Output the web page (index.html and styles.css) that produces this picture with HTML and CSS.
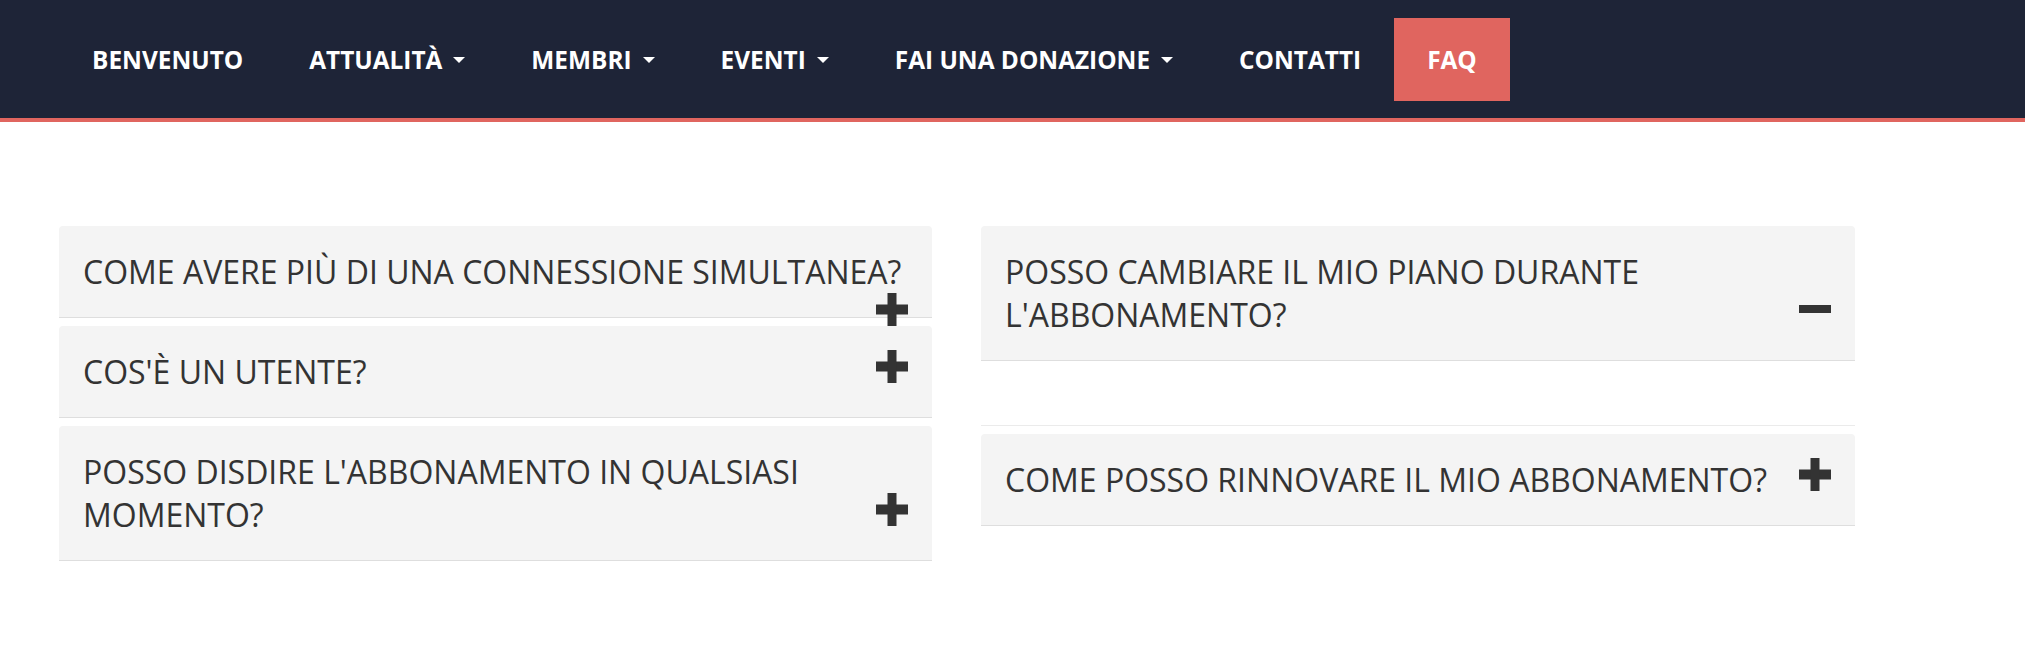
FILE: index.html
```html
<!DOCTYPE html>
<html lang="it">
  <head>
    <meta charset="UTF-8" />
    <meta name="viewport" content="width=device-width, initial-scale=1.0" />
    <title>FAQ</title>
    <link rel="stylesheet" href="styles.css">
  </head>
  <body>
    <nav class="topbar">
      <ul class="menu">
        <li><a href="#">Benvenuto</a></li>
        <li><a href="#">Attualità <span class="caret"></span></a></li>
        <li><a href="#">Membri <span class="caret"></span></a></li>
        <li><a href="#">Eventi <span class="caret"></span></a></li>
        <li><a href="#">Fai una donazione <span class="caret"></span></a></li>
        <li><a href="#">Contatti</a></li>
        <li class="active"><a href="#">FAQ</a></li>
      </ul>
    </nav>

    <main class="faq">
      <div class="faq-col">
        <div class="faq-item">
          <h4 class="faq-title">Come avere più di una connessione simultanea?<span class="faq-icon"><svg width="32" height="33" viewBox="0 0 32 33"><rect x="0" y="11.5" width="32" height="10" /><rect x="11.5" y="0" width="9" height="33" /></svg></span></h4>
        </div>
        <div class="faq-item">
          <h4 class="faq-title">Cos'è un utente?<span class="faq-icon"><svg width="32" height="33" viewBox="0 0 32 33"><rect x="0" y="11.5" width="32" height="10" /><rect x="11.5" y="0" width="9" height="33" /></svg></span></h4>
        </div>
        <div class="faq-item">
          <h4 class="faq-title">Posso disdire l'abbonamento in qualsiasi momento?<span class="faq-icon"><svg width="32" height="33" viewBox="0 0 32 33"><rect x="0" y="11.5" width="32" height="10" /><rect x="11.5" y="0" width="9" height="33" /></svg></span></h4>
        </div>
      </div>

      <div class="faq-col">
        <div class="faq-item open">
          <h4 class="faq-title">Posso cambiare il mio piano durante l'abbonamento?<span class="faq-icon"><svg width="32" height="33" viewBox="0 0 32 33"><rect x="0" y="12" width="33" height="8" /></svg></span></h4>
        </div>
        <div class="faq-body"></div>
        <div class="faq-item">
          <h4 class="faq-title">Come posso rinnovare il mio abbonamento?<span class="faq-icon"><svg width="32" height="33" viewBox="0 0 32 33"><rect x="0" y="11.5" width="32" height="10" /><rect x="11.5" y="0" width="9" height="33" /></svg></span></h4>
        </div>
      </div>
    </main>
  </body>
</html>
```

FILE: styles.css
```css
body {
  font-family: "Open Sans", Arial, sans-serif;
  margin: 0;
  padding: 0;
  background-color: #fff;
  color: #333;
}

/* Top navigation */
.topbar {
  background-color: #1e2437;
  border-bottom: 4px solid #e0655f;
  height: 118px;
  padding-left: 59px;
  display: flex;
  align-items: center;
}

.menu {
  list-style: none;
  margin: 0;
  padding: 0;
  display: flex;
}

.menu a {
  display: flex;
  align-items: center;
  gap: 11px;
  height: 83px;
  padding: 0 33px;
  color: #fff;
  font-size: 24.4px;
  font-weight: 700;
  text-transform: uppercase;
  text-decoration: none;
}

.menu .active a {
  background-color: #e0655f;
}

.caret {
  width: 0;
  height: 0;
  border-top: 6px solid #fff;
  border-left: 6px solid transparent;
  border-right: 6px solid transparent;
  margin-top: 2px;
}

/* FAQ accordion */
.faq {
  display: grid;
  grid-template-columns: 873px 874px;
  column-gap: 49px;
  align-items: start;
  padding: 104px 0 0 59px;
}

.faq-item {
  background-color: #f4f4f4;
  border-bottom: 1px solid #dedede;
  border-radius: 4px 4px 0 0;
  margin-bottom: 8px;
}

.faq-item.open {
  margin-bottom: 0;
}

.faq-title {
  margin: 0;
  padding: 24px;
  font-size: 32px;
  font-weight: 400;
  line-height: 43px;
  text-transform: uppercase;
  color: #333;
}

.faq-icon {
  float: right;
  height: 33px;
}

.faq-icon svg {
  display: block;
  fill: #333;
}

.faq-body {
  padding: 32px 24px;
  border-bottom: 1px solid #ebebeb;
  margin-bottom: 8px;
}
```
